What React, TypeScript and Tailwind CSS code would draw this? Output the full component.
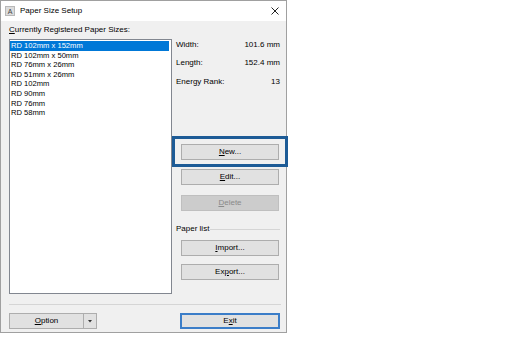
import React from "react";

const items = [
  "RD 102mm x 152mm",
  "RD 102mm x 50mm",
  "RD 76mm x 26mm",
  "RD 51mm x 26mm",
  "RD 102mm",
  "RD 90mm",
  "RD 76mm",
  "RD 58mm",
];

function Btn({
  children,
  disabled,
  className = "",
}: {
  children: React.ReactNode;
  disabled?: boolean;
  className?: string;
}) {
  return (
    <div
      className={
        "h-[16px] flex items-center justify-center border text-[8px] leading-none " +
        (disabled
          ? "bg-[#cccccc] border-[#bfbfbf] text-[#8a8a8a] "
          : "bg-[#e1e1e1] border-[#adadad] text-black ") +
        className
      }
    >
      {children}
    </div>
  );
}

export default function App() {
  return (
    <div
      className="w-[508px] h-[337px] bg-white"
      style={{ fontFamily: '"Liberation Sans", Arial, sans-serif' }}
    >
      <div className="w-[287px] h-[333px] border border-[#a0a0a0] bg-[#f0f0f0] flex flex-col">
        {/* Title bar */}
        <div className="h-[20px] bg-white flex items-center shrink-0">
          <div className="ml-[4px] w-[10px] h-[10px] bg-[#dcdcdc] border border-[#b8b8b8] flex items-center justify-center text-[7px] leading-none text-[#444]">
            A
          </div>
          <div className="ml-[5px] text-[8px] text-black leading-none">Paper Size Setup</div>
          <div className="flex-1" />
          <svg width="8" height="8" viewBox="0 0 8 8" className="mr-[7px]">
            <path d="M0.5 0.5 L7.5 7.5 M7.5 0.5 L0.5 7.5" stroke="#222" strokeWidth="1" />
          </svg>
        </div>

        {/* Body */}
        <div className="flex-1 flex flex-col pl-[8px] pr-[6px]">
          <div className="mt-[3px] h-[12px] leading-[12px] text-[8px] text-black">
            <span className="underline">C</span>urrently Registered Paper Sizes:
          </div>
          <div className="mt-[3px] flex">
            {/* List */}
            <div className="w-[163px] h-[255px] border border-[#828790] bg-white pt-[1px] flex flex-col">
              {items.map((t, i) => (
                <div
                  key={t}
                  className={
                    "h-[9.6px] leading-[9.6px] text-[7.6px] pl-[1px] mr-[2px] " +
                    (i === 0 ? "bg-[#0078d7] text-white" : "text-black")
                  }
                >
                  {t}
                </div>
              ))}
            </div>

            {/* Right column */}
            <div className="ml-[4px] w-[104px] flex flex-col text-[8px] text-black">
              <div className="h-[12px] leading-[12px] flex justify-between">
                <span>Width:</span>
                <span>101.6 mm</span>
              </div>
              <div className="mt-[6px] h-[12px] leading-[12px] flex justify-between">
                <span>Length:</span>
                <span>152.4 mm</span>
              </div>
              <div className="mt-[7px] h-[12px] leading-[12px] flex justify-between">
                <span>Energy Rank:</span>
                <span>13</span>
              </div>

              <div className="mt-[56px] ml-[5px] w-[98px] relative">
                <Btn>
                  <span>
                    <span className="underline">N</span>ew...
                  </span>
                </Btn>
                <div className="absolute left-[-9px] right-[-9px] top-[-8px] bottom-[-7px] border-[3px] border-[#1d5b96]" />
              </div>
              <Btn className="mt-[9px] ml-[5px] w-[98px]">
                <span>
                  <span className="underline">E</span>dit...
                </span>
              </Btn>
              <Btn disabled className="mt-[10px] ml-[5px] w-[98px]">
                <span>
                  <span className="underline">D</span>elete
                </span>
              </Btn>

              <div className="mt-[12px] h-[12px] leading-[12px] flex items-center">
                <span>Paper list</span>
                <div className="flex-1 ml-[1px] h-px bg-[#d5d5d5]" />
              </div>
              <Btn className="mt-[5px] ml-[5px] w-[98px]">
                <span>
                  <span className="underline">I</span>mport...
                </span>
              </Btn>
              <Btn className="mt-[8px] ml-[5px] w-[98px]">
                <span>
                  Ex<span className="underline">p</span>ort...
                </span>
              </Btn>
            </div>
          </div>

          <div className="mt-[10px] h-px bg-[#d5d5d5] w-[272px]" />

          <div className="mt-[8px] flex justify-between">
            <div className="w-[88px] h-[16px] flex bg-[#e1e1e1] border border-[#adadad] text-[8px] text-black">
              <div className="flex-1 flex items-center justify-center border-r border-[#adadad]">
                <span>
                  <span className="underline">O</span>ption
                </span>
              </div>
              <div className="w-[12px] flex items-center justify-center">
                <svg width="4" height="3" viewBox="0 0 4 3">
                  <path d="M0 0 L4 0 L2 2.5 Z" fill="#333" />
                </svg>
              </div>
            </div>
            <div className="w-[100px] h-[16px] flex items-center justify-center bg-[#e1e1e1] border-2 border-[#3b7dc8] text-[8px] text-black">
              <span>
                E<span className="underline">x</span>it
              </span>
            </div>
          </div>
        </div>
      </div>
    </div>
  );
}
